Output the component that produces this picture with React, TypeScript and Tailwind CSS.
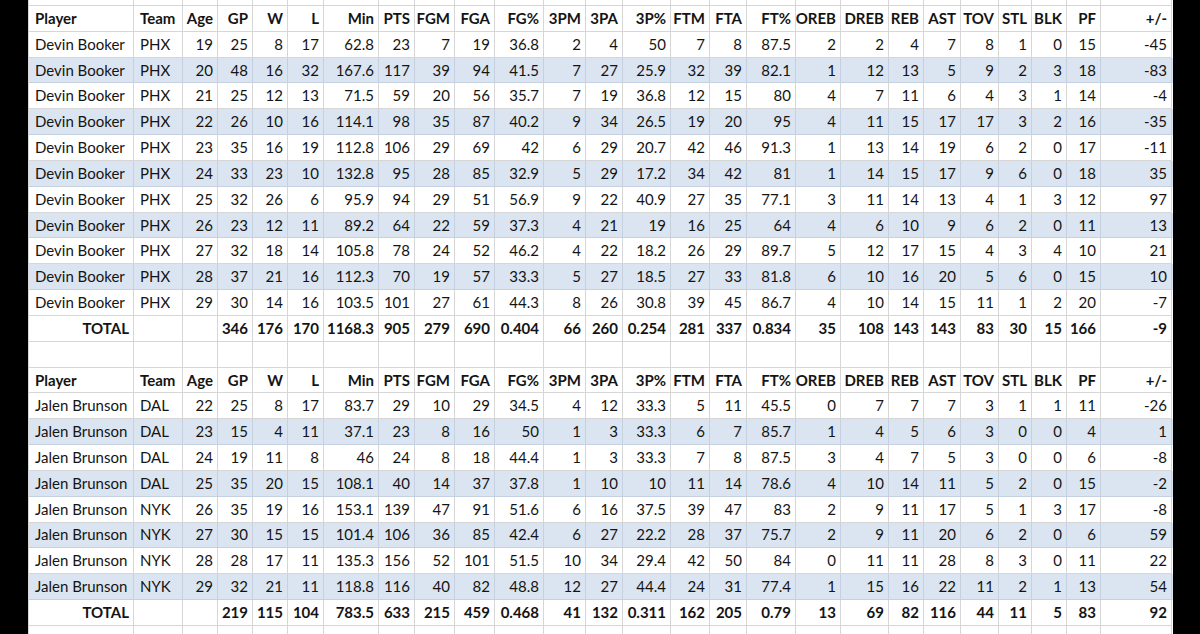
import React from 'react';

type Row = (string | number)[];

const headers = [
  'Player', 'Team', 'Age', 'GP', 'W', 'L', 'Min', 'PTS', 'FGM', 'FGA', 'FG%', '3PM', '3PA', '3P%',
  'FTM', 'FTA', 'FT%', 'OREB', 'DREB', 'REB', 'AST', 'TOV', 'STL', 'BLK', 'PF', '+/-',
];

const booker: Row[] = [
  [19, 25, 8, 17, 62.8, 23, 7, 19, 36.8, 2, 4, 50, 7, 8, 87.5, 2, 2, 4, 7, 8, 1, 0, 15, -45],
  [20, 48, 16, 32, 167.6, 117, 39, 94, 41.5, 7, 27, 25.9, 32, 39, 82.1, 1, 12, 13, 5, 9, 2, 3, 18, -83],
  [21, 25, 12, 13, 71.5, 59, 20, 56, 35.7, 7, 19, 36.8, 12, 15, 80, 4, 7, 11, 6, 4, 3, 1, 14, -4],
  [22, 26, 10, 16, 114.1, 98, 35, 87, 40.2, 9, 34, 26.5, 19, 20, 95, 4, 11, 15, 17, 17, 3, 2, 16, -35],
  [23, 35, 16, 19, 112.8, 106, 29, 69, 42, 6, 29, 20.7, 42, 46, 91.3, 1, 13, 14, 19, 6, 2, 0, 17, -11],
  [24, 33, 23, 10, 132.8, 95, 28, 85, 32.9, 5, 29, 17.2, 34, 42, 81, 1, 14, 15, 17, 9, 6, 0, 18, 35],
  [25, 32, 26, 6, 95.9, 94, 29, 51, 56.9, 9, 22, 40.9, 27, 35, 77.1, 3, 11, 14, 13, 4, 1, 3, 12, 97],
  [26, 23, 12, 11, 89.2, 64, 22, 59, 37.3, 4, 21, 19, 16, 25, 64, 4, 6, 10, 9, 6, 2, 0, 11, 13],
  [27, 32, 18, 14, 105.8, 78, 24, 52, 46.2, 4, 22, 18.2, 26, 29, 89.7, 5, 12, 17, 15, 4, 3, 4, 10, 21],
  [28, 37, 21, 16, 112.3, 70, 19, 57, 33.3, 5, 27, 18.5, 27, 33, 81.8, 6, 10, 16, 20, 5, 6, 0, 15, 10],
  [29, 30, 14, 16, 103.5, 101, 27, 61, 44.3, 8, 26, 30.8, 39, 45, 86.7, 4, 10, 14, 15, 11, 1, 2, 20, -7],
];
const bookerTotal: Row = [
  '', 346, 176, 170, 1168.3, 905, 279, 690, '0.404', 66, 260, '0.254', 281, 337, '0.834', 35, 108, 143, 143, 83, 30, 15, 166, -9,
];

const brunson: Row[] = [
  ['DAL', 22, 25, 8, 17, 83.7, 29, 10, 29, 34.5, 4, 12, 33.3, 5, 11, 45.5, 0, 7, 7, 7, 3, 1, 1, 11, -26],
  ['DAL', 23, 15, 4, 11, 37.1, 23, 8, 16, 50, 1, 3, 33.3, 6, 7, 85.7, 1, 4, 5, 6, 3, 0, 0, 4, 1],
  ['DAL', 24, 19, 11, 8, 46, 24, 8, 18, 44.4, 1, 3, 33.3, 7, 8, 87.5, 3, 4, 7, 5, 3, 0, 0, 6, -8],
  ['DAL', 25, 35, 20, 15, 108.1, 40, 14, 37, 37.8, 1, 10, 10, 11, 14, 78.6, 4, 10, 14, 11, 5, 2, 0, 15, -2],
  ['NYK', 26, 35, 19, 16, 153.1, 139, 47, 91, 51.6, 6, 16, 37.5, 39, 47, 83, 2, 9, 11, 17, 5, 1, 3, 17, -8],
  ['NYK', 27, 30, 15, 15, 101.4, 106, 36, 85, 42.4, 6, 27, 22.2, 28, 37, 75.7, 2, 9, 11, 20, 6, 2, 0, 6, 59],
  ['NYK', 28, 28, 17, 11, 135.3, 156, 52, 101, 51.5, 10, 34, 29.4, 42, 50, 84, 0, 11, 11, 28, 8, 3, 0, 11, 22],
  ['NYK', 29, 32, 21, 11, 118.8, 116, 40, 82, 48.8, 12, 27, 44.4, 24, 31, 77.4, 1, 15, 16, 22, 11, 2, 1, 13, 54],
];
const brunsonTotal: Row = [
  '', 219, 115, 104, 783.5, 633, 215, 459, '0.468', 41, 132, '0.311', 162, 205, '0.79', 13, 69, 82, 116, 44, 11, 5, 83, 92,
];

const gridCols =
  'grid grid-cols-[105px_49px_35px_35px_35px_36px_55px_36px_40px_40px_49px_42px_37px_48px_39px_37px_49px_45px_48px_35px_37px_38px_33px_35px_34px_71px]';

function SheetRow({
  cells,
  striped = false,
  bold = false,
  height = 'h-[25.83px]',
}: {
  cells: (string | number)[];
  striped?: boolean;
  bold?: boolean;
  height?: string;
}) {
  return (
    <div
      className={`${gridCols} ${height} shrink-0 ${striped ? 'bg-[#dbe5f1]' : 'bg-white'} ${
        bold ? 'font-bold' : ''
      }`}
    >
      {cells.map((c, i) => {
        const left = i < 2 && !(bold && i === 0 && c === 'TOTAL');
        return (
          <div
            key={i}
            className={`flex items-center overflow-hidden whitespace-nowrap border-r border-b ${
              striped ? 'border-[#c5d1e0]' : 'border-[#d6d6d6]'
            } ${left ? 'justify-start pl-[6px]' : 'justify-end pr-[4px]'}`}
          >
            {c}
          </div>
        );
      })}
    </div>
  );
}

const blank = headers.map(() => '');

export default function App() {
  return (
    <div
      className="flex h-[634px] w-[1200px] overflow-hidden bg-black text-[15px] leading-none text-[#141414]"
      style={{ fontFamily: 'Lato, "Open Sans", sans-serif' }}
    >
      <div className="w-[28px] shrink-0 bg-black" />
      <div className="flex w-[1145px] shrink-0 flex-col overflow-hidden border-l border-[#d6d6d6] bg-white">
        <SheetRow cells={blank} height="h-[6px]" />
        <SheetRow cells={headers} bold />
        {booker.map((r, i) => (
          <SheetRow key={`b${i}`} cells={['Devin Booker', 'PHX', ...r]} striped={i % 2 === 1} />
        ))}
        <SheetRow cells={['TOTAL', '', ...bookerTotal]} bold />
        <SheetRow cells={blank} />
        <SheetRow cells={headers} bold />
        {brunson.map((r, i) => (
          <SheetRow key={`j${i}`} cells={['Jalen Brunson', ...r]} striped={i % 2 === 1} />
        ))}
        <SheetRow cells={['TOTAL', '', ...brunsonTotal]} bold />
        <SheetRow cells={blank} />
      </div>
      <div className="flex-1 bg-black" />
    </div>
  );
}
